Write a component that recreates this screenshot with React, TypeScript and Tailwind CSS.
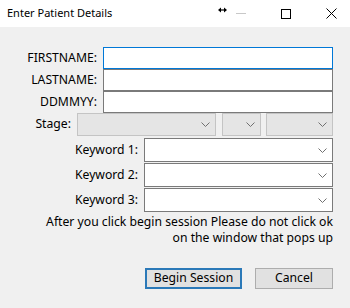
import React from "react";

const font = { fontFamily: '"Noto Sans", "Open Sans", sans-serif' };

function Chevron() {
  return (
    <svg width="9" height="5" viewBox="0 0 9 5" className="shrink-0">
      <path d="M0.5 0.5 L4.5 4.5 L8.5 0.5" fill="none" stroke="#707070" strokeWidth="1" />
    </svg>
  );
}

function Combo({ w, grey }: { w: string; grey?: boolean }) {
  return (
    <div
      className={`${w} h-full flex items-center justify-end pr-[5px] border ${
        grey ? "bg-[#e5e5e5] border-[#c4c4c4]" : "bg-white border-[#7a7a7a]"
      }`}
    >
      <Chevron />
    </div>
  );
}

export default function App() {
  return (
    <div
      className="w-[350px] h-[308px] bg-[#f0f0f0] flex flex-col text-[12.2px] text-black overflow-hidden"
      style={font}
    >
      {/* Title bar */}
      <div className="h-[27px] bg-white flex items-center shrink-0 relative">
        <span className="ml-[7px] text-[11px]">Enter Patient Details</span>
        <div className="ml-auto flex items-center h-full">
          <svg width="9" height="6" viewBox="0 0 9 6" className="mb-[8px]">
            <path d="M1 3 H8" stroke="#000" strokeWidth="1.2" />
            <path d="M0 3 L3 0.5 V5.5 Z" fill="#000" />
            <path d="M9 3 L6 0.5 V5.5 Z" fill="#000" />
          </svg>
          <div className="ml-[9px] w-[10px] h-[1px] bg-[#c8c8c8]" />
          <div className="ml-[35px] w-[10px] h-[10px] border border-black" />
          <svg width="11" height="11" viewBox="0 0 11 11" className="ml-[35px] mr-[13px]">
            <path d="M0.5 0.5 L10.5 10.5 M10.5 0.5 L0.5 10.5" stroke="#000" strokeWidth="1" />
          </svg>
        </div>
      </div>

      {/* Body */}
      <div className="flex flex-col pt-[20px]">
        <div className="flex h-[22px] items-center">
          <span className="w-[97px] text-right">FIRSTNAME:</span>
          <div className="ml-[6px] w-[230px] h-full bg-white border border-[#0078d7]" />
        </div>
        <div className="flex h-[22px] items-center">
          <span className="w-[97px] text-right">LASTNAME:</span>
          <div className="ml-[6px] w-[230px] h-full bg-white border border-[#7a7a7a]" />
        </div>
        <div className="flex h-[22px] items-center">
          <span className="w-[97px] text-right">DDMMYY:</span>
          <div className="ml-[6px] w-[230px] h-full bg-white border border-[#7a7a7a]" />
        </div>
        <div className="flex h-[23px] items-center">
          <span className="w-[71px] text-right">Stage:</span>
          <div className="ml-[6px] flex h-full">
            <Combo w="w-[139px]" grey />
            <div className="ml-[6px] h-full flex">
              <Combo w="w-[39px]" grey />
            </div>
            <div className="ml-[5px] h-full flex">
              <Combo w="w-[67px]" grey />
            </div>
          </div>
        </div>

        <div className="flex flex-col gap-[1px] mt-[2px]">
          {["Keyword 1:", "Keyword 2:", "Keyword 3:"].map((k) => (
            <div key={k} className="flex h-[24px] items-center">
              <span className="w-[138px] text-right">{k}</span>
              <div className="ml-[6px] h-full flex">
                <Combo w="w-[189px]" />
              </div>
            </div>
          ))}
        </div>

        <div className="w-[333px] text-right leading-[16px] mt-[2px]">
          After you click begin session Please do not click ok
          <br />
          on the window that pops up
        </div>

        <div className="w-[333px] flex justify-end mt-[22px]">
          <button className="w-[97px] h-[21px] bg-[#e1e1e1] border-2 border-[#2b79b8] flex items-center justify-center">
            Begin Session
          </button>
          <button className="ml-[13px] w-[78px] h-[21px] bg-[#e1e1e1] border border-[#adadad] flex items-center justify-center">
            Cancel
          </button>
        </div>
      </div>
    </div>
  );
}
